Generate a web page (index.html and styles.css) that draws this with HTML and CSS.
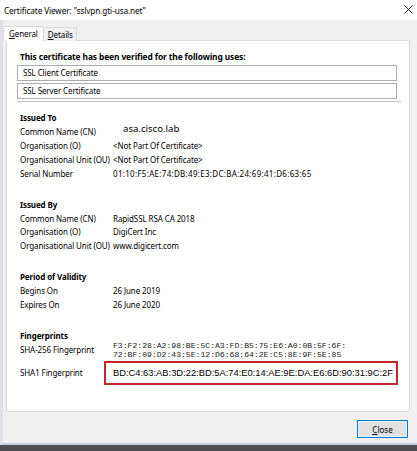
FILE: index.html
```html
<!DOCTYPE html>
<html lang="en">
<head>
  <meta charset="UTF-8">
  <title>Certificate Viewer</title>
  <link rel="stylesheet" href="styles.css">
</head>
<body>
  <div class="window">
    <div class="titlebar">
      <span class="title">Certificate Viewer: "sslvpn.gti-usa.net"</span>
      <svg class="close-x" width="9" height="9" viewBox="0 0 9 9">
        <path d="M0.5 0.5 L8.5 8.5 M8.5 0.5 L0.5 8.5" stroke="#222" stroke-width="1" fill="none"/>
      </svg>
    </div>

    <div class="client">
      <div class="tabs">
        <div class="tab active"><u>G</u>eneral</div>
        <div class="tab"><u>D</u>etails</div>
      </div>

      <div class="panel">
        <div class="uses">
          <h3>This certificate has been verified for the following uses:</h3>
          <div class="use">SSL Client Certificate</div>
          <div class="use">SSL Server Certificate</div>
        </div>
        <div class="sep"></div>

        <div class="section">
          <h4>Issued To</h4>
          <div class="rows">
            <span>Common Name (CN)</span><span class="pasted">asa.cisco.lab</span>
            <span>Organisation (O)</span><span>&lt;Not Part Of Certificate&gt;</span>
            <span>Organisational Unit (OU)</span><span>&lt;Not Part Of Certificate&gt;</span>
            <span>Serial Number</span><span class="serial">01:10:F5:AE:74:DB:49:E3:DC:BA:24:69:41:D6:63:65</span>
          </div>
        </div>

        <div class="section">
          <h4>Issued By</h4>
          <div class="rows">
            <span>Common Name (CN)</span><span>RapidSSL RSA CA 2018</span>
            <span>Organisation (O)</span><span>DigiCert Inc</span>
            <span>Organisational Unit (OU)</span><span>www.digicert.com</span>
          </div>
        </div>

        <div class="section">
          <h4>Period of Validity</h4>
          <div class="rows">
            <span>Begins On</span><span>26 June 2019</span>
            <span>Expires On</span><span>26 June 2020</span>
          </div>
        </div>

        <div class="section">
          <h4>Fingerprints</h4>
          <div class="rows">
            <span>SHA-256 Fingerprint</span>
            <span class="mono">F3:F2:28:A2:98:BE:5C:A3:FD:B5:75:E6:A0:0B:5F:6F:<br>72:BF:09:D2:43:5E:12:D6:68:64:2E:C5:8E:9F:5E:85</span>
          </div>
          <div class="sha1">
            <span>SHA1 Fingerprint</span>
            <span class="highlight">BD:C4:63:AB:3D:22:BD:5A:74:E0:14:AE:9E:DA:E6:6D:90:31:9C:2F</span>
          </div>
        </div>
      </div>

      <div class="footer">
        <button type="button"><u>C</u>lose</button>
      </div>
    </div>
  </div>
</body>
</html>
```

FILE: styles.css
```css
body {
  margin: 0;
  font-family: "Noto Sans", "Open Sans", sans-serif;
  font-size: 8px;
  letter-spacing: -0.1px;
  color: #000;
  background: #fff;
}
.window {
  width: 417px;
  height: 451px;
  display: flex;
  flex-direction: column;
  box-sizing: border-box;
  border-bottom: 6px solid #4e4e52;
}
.titlebar {
  height: 20px;
  display: flex;
  align-items: center;
  justify-content: space-between;
  padding: 0 4px 0 4px;
  background: #fff;
}
.title {
  font-size: 8.2px;
  margin-top: 1px;
}
.close-x {
  margin-bottom: 1px;
}
.client {
  flex: 1;
  background: #f0f0f0;
  border-left: 3px solid #dfe0ea;
  border-bottom: 2px solid #c8cadf;
  display: flex;
  flex-direction: column;
  padding: 6px 7px 0 3px;
}
.tabs {
  display: flex;
  height: 15px;
  position: relative;
  z-index: 1;
}
.tab {
  padding: 0 3px;
  line-height: 14px;
  border: 1px solid #d9d9d9;
  border-bottom: none;
  background: #f0f0f0;
  margin-top: 1px;
}
.tab.active {
  background: #fff;
  margin: 0 1px 0 -3px;
  padding: 0 5px 1px 5px;
  line-height: 14px;
}
.tab + .tab {
  border-left: none;
}
.panel {
  height: 372px;
  box-sizing: border-box;
  background: #fff;
  border: 1px solid #d9d9d9;
  margin-top: -1px;
  padding: 9px 10px 0 10px;
}
.uses h3 {
  margin: 0 0 1px 3px;
  font-size: 8.4px;
  font-weight: bold;
  line-height: 14px;
}
.use {
  height: 16px;
  box-sizing: border-box;
  border: 1px solid #abadb3;
  padding-left: 5px;
  line-height: 14px;
  margin-bottom: 2px;
  margin-right: 2px;
}
.sep {
  height: 1px;
  background: #c2c2c2;
  margin: 2px -2px 0 0;
}
.section {
  padding-left: 3px;
  margin-bottom: 17px;
}
.sep + .section {
  margin-top: 9px;
}
.section h4 {
  margin: 0;
  font-size: 8px;
  font-weight: bold;
  line-height: 14px;
}
.rows {
  display: grid;
  grid-template-columns: 93px 1fr;
  grid-auto-rows: 13.9px;
  align-items: center;
  line-height: 13.9px;
}
.pasted {
  font-size: 9.6px;
  letter-spacing: 0;
  margin: -5px 0 0 10px;
}
.serial {
  letter-spacing: 0.3px;
}
.mono {
  font-family: "Liberation Mono", "Courier New", monospace;
  font-size: 8.1px;
  letter-spacing: 0;
  line-height: 9px;
  color: #222;
}
.sha1 {
  display: grid;
  grid-template-columns: 84px 1fr;
  align-items: center;
  margin-top: 4px;
  margin-right: 1px;
}
.highlight {
  height: 24px;
  box-sizing: border-box;
  border: 2px solid #c4262e;
  padding-left: 7px;
  line-height: 20px;
  letter-spacing: 0;
  font-family: "Liberation Sans", Arial, sans-serif;
  font-size: 9.35px;
}
.footer {
  display: flex;
  justify-content: flex-end;
  padding: 8px 2px 0 0;
}
.footer button {
  width: 51px;
  height: 18px;
  font-family: inherit;
  font-size: 8px;
  background: #e1e1e1;
  border: 1px solid #0078d7;
  box-shadow: inset 0 0 0 1px #e5f1fb;
  padding: 0;
}
```
